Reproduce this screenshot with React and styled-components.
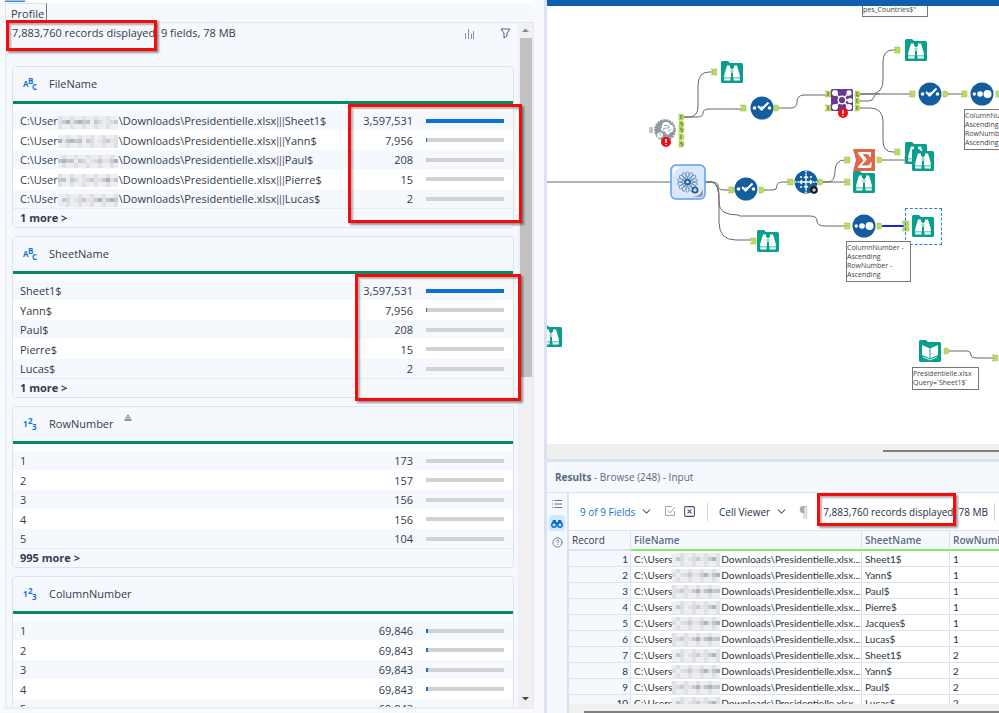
import React from 'react'
import styled, { createGlobalStyle, css } from 'styled-components'
import { ChevronDown, List, CircleHelp, SquareX } from 'lucide-react'

const profiles = [
  {
    name: 'FileName',
    kind: 'text',
    more: '1 more >',
    masked: true,
    rows: [
      ['Sheet1$', '3,597,531', 100],
      ['Yann$', '7,956', 1],
      ['Paul$', '208', 0],
      ['Pierre$', '15', 0],
      ['Lucas$', '2', 0],
    ],
  },
  {
    name: 'SheetName',
    kind: 'text',
    more: '1 more >',
    rows: [
      ['Sheet1$', '3,597,531', 100],
      ['Yann$', '7,956', 1],
      ['Paul$', '208', 0],
      ['Pierre$', '15', 0],
      ['Lucas$', '2', 0],
    ],
  },
  {
    name: 'RowNumber',
    kind: 'number',
    more: '995 more >',
    warning: true,
    rows: [
      ['1', '173', 0],
      ['2', '157', 0],
      ['3', '156', 0],
      ['4', '156', 0],
      ['5', '104', 0],
    ],
  },
  {
    name: 'ColumnNumber',
    kind: 'number',
    more: '995 more >',
    rows: [
      ['1', '69,846', 2],
      ['2', '69,843', 2],
      ['3', '69,843', 2],
      ['4', '69,843', 2],
      ['5', '69,843', 2],
    ],
  },
]

const records = [
  ['Sheet1$', 1], ['Yann$', 1], ['Paul$', 1], ['Pierre$', 1], ['Jacques$', 1],
  ['Lucas$', 1], ['Sheet1$', 2], ['Yann$', 2], ['Paul$', 2], ['Lucas$', 2],
]

const shades = ['#dfe1e6', '#c6c9d0', '#e6e4e6', '#aeb3bc', '#eceef2', '#cdc9ce', '#bfc4cd', '#d6dae2']

const Mosaic = ({ cols, seed }) => (
  <MosaicSvg width={cols * 4} height="13" aria-hidden="true">
    {Array.from({ length: cols * 3 }, (_, i) => {
      const col = i % cols
      const row = Math.floor(i / cols)
      const pick = row === 1 ? (col * 5 + seed * 3 + (col >> 1)) % 8 : ((col + seed) % 3 ? 4 : 0)
      return <rect key={i} x={col * 4} y={row * 4} width="4" height="5" fill={shades[pick]} />
    })}
  </MosaicSvg>
)

const TypeIcon = ({ kind }) => {
  const [a, b, c] = kind === 'text' ? 'ABC' : '123'
  return (
    <GlyphSvg width="16" height="14" aria-hidden="true">
      <text x="0" y="10">{a}</text>
      <text x="5" y="7">{b}</text>
      <text x="9" y="13">{c}</text>
    </GlyphSvg>
  )
}

const ProfileCard = ({ item }) => (
  <Card>
    <CardHeader>
      <TypeIcon kind={item.kind} />
      <CardTitle>{item.name}</CardTitle>
      {item.warning && (
        <WarnSvg width="8" height="7" viewBox="0 0 8 7">
          <path d="M4 .8 7.4 6.4H.6Z M4 2.8V4.6 M2.4 5.4H5.6" fill="#e9ebef" stroke="#6b7079" strokeWidth=".8" />
        </WarnSvg>
      )}
    </CardHeader>
    <ValueTable>
      <tbody>
        {item.rows.map(([label, count, share], i) => (
          <ValueRow key={label}>
            <td>
              {item.masked
                ? <>C:\User<Mosaic cols={15} seed={i} />\Downloads\Presidentielle.xlsx<Pipes>|||</Pipes>{label}</>
                : label}
            </td>
            <CountCell>{count}</CountCell>
            <BarCell>
              <Track><Fill style={{ width: `${share}%` }} /></Track>
            </BarCell>
          </ValueRow>
        ))}
      </tbody>
    </ValueTable>
    <MoreButton>{item.more}</MoreButton>
  </Card>
)

const Folder = () => <path d="M0 1.5Q0 0 1.5 0H7L9 2H20.500Q22 2 22 3.500V20.500Q22 22 20.500 22H1.500Q0 22 0 20.500Z" fill="#08a08c" />

const BrowseIcon = () => (
  <svg width="22" height="22" viewBox="0 0 22 22">
    <Folder />
    <path d="M6 4.500H9V7H10V16.500H3.200V14Z M13 4.500H16L18.800 14V16.500H12V7H13Z M9 8H13V12H9Z" fill="#fff" />
    <path d="M3.200 17.300H9.500V19.500H3.200Z M12.500 17.300H18.800V19.500H12.500Z" fill="#fff" />
    <path d="M10.200 8.500V12 M11.800 8.500V12" stroke="#08a08c" strokeWidth=".6" />
  </svg>
)

const InputIcon = () => (
  <svg width="22" height="22" viewBox="0 0 22 22">
    <Folder />
    <path d="M3 5 11 8.500 19 5V15L11 18.500 3 15Z" fill="#fff" />
    <path d="M11 8.500V18 M3 16.500 11 20 19 16.500" fill="none" stroke="#08a08c" />
    <path d="M4 17 11 20 18 17" fill="none" stroke="#fff" strokeWidth=".8" />
  </svg>
)

const SelectIcon = () => (
  <svg width="24" height="24" viewBox="0 0 24 24">
    <circle cx="12" cy="12" r="11.500" fill="#145d9f" />
    <g fill="#fff"><circle cx="4.500" cy="12" r="1.800" /><circle cx="12" cy="12" r="1.800" /><circle cx="19.500" cy="12" r="1.800" /></g>
    <path d="m8 10 3.500 3.500 7-7" fill="none" stroke="#fff" strokeWidth="2" />
  </svg>
)

const SortIcon = () => (
  <svg width="24" height="24" viewBox="0 0 24 24">
    <circle cx="12" cy="12" r="11.500" fill="#145d9f" />
    <g fill="#fff"><circle cx="4.300" cy="12" r="1.700" /><circle cx="10" cy="12" r="2.800" /><circle cx="17.500" cy="12" r="4" /></g>
  </svg>
)

const TransposeIcon = () => (
  <svg width="24" height="24" viewBox="0 0 24 24">
    <circle cx="12" cy="12" r="11.500" fill="#145d9f" />
    <path d="M12 6V18M6 12H18M10 8l2-2 2 2M10 16l2 2 2-2M8 10l-2 2 2 2M16 10l2 2-2 2" fill="none" stroke="#fff" strokeWidth="1.300" />
    <path d="M12 1V5M12 19V23M1 12H5M19 12H23" stroke="#fff" strokeWidth="1.500" strokeDasharray="1.500 1" />
    <g fill="#fff"><circle cx="7" cy="7" r="1" /><circle cx="17" cy="7" r="1" /><circle cx="7" cy="17" r="1" /></g>
    <circle cx="20" cy="20" r="3.800" fill="#151515" />
    <path d="M20 18V22M18 20H22" stroke="#fff" />
  </svg>
)

const SummarizeIcon = () => (
  <svg width="22" height="22" viewBox="0 0 22 22">
    <path d="M0 0H22V22H0L3 11Z" fill="#e2654b" />
    <path d="M5 3H18V8H16.500Q16 5 13 5H9.500L14 10.500 8.500 16.500H14Q17 16.500 17.500 13.500H19L18 19H5V17.500L10.500 11.500 5 4.500Z" fill="#fff" />
  </svg>
)

const ErrorBadge = ({ cx, cy }) => (
  <>
    <circle cx={cx} cy={cy} r="5" fill="#f30b14" />
    <path d={`M${cx} ${cy - 3}v4M${cx} ${cy + 2}v1`} stroke="#fff" strokeWidth="1.500" />
  </>
)

const JoinIcon = () => (
  <svg width="22" height="30" viewBox="0 0 22 30">
    <rect width="22" height="22" rx="1.500" fill="#663a93" />
    <path d="M4 4 18 18M18 4 4 18M11 11H19" stroke="#fff" strokeWidth="1.300" />
    <g fill="#fff"><circle cx="4" cy="4" r="3" /><circle cx="18" cy="4" r="2.700" /><circle cx="19" cy="11.500" r="2.500" /><circle cx="4" cy="18" r="3" /><circle cx="18" cy="18" r="3" /></g>
    <circle cx="11" cy="11" r="3.800" fill="#663a93" stroke="#fff" strokeWidth="1.400" />
    <ErrorBadge cx={12} cy={24} />
  </svg>
)

const PythonIcon = () => (
  <svg width="24" height="30" viewBox="0 0 24 30">
    <circle cx="12" cy="12" r="10" fill="#8d9a9f" />
    <circle cx="12" cy="12" r="10" fill="none" stroke="#8d9a9f" strokeWidth="2" strokeDasharray="2 1" />
    <path d="M9 8Q9 4 13 4 17 4 17 6.500 21 7 20.500 11 20 14.500 17 14.500 16 18 13 16L12 13.500H10Q8 13 8 11Z" fill="#fff" />
    <path d="M11.500 7.500H15Q17 8 16 10H13Q10 10 10 12.500M15 13Q17 13 18 11" fill="none" stroke="#8d9a9f" strokeWidth=".9" />
    <circle cx="7" cy="17" r="2.800" fill="#fff" />
    <path d="m6 15 2 2.500" stroke="#8d9a9f" />
    <ErrorBadge cx={13} cy={24} />
  </svg>
)

const MacroIcon = () => (
  <svg width="36" height="36" viewBox="0 0 36 36">
    <rect x="1" y="1" width="34" height="34" rx="5" fill="#d9e8fc" stroke="#639bf5" strokeWidth="1.500" />
    <path d="M3 12Q4 3 15 3H7Q3 3 3 7Z" fill="#fff" />
    <path d="M22 33Q31 32 33 25V30Q33 33 30 33Z" fill="#8d98a8" />
    <g fill="none" stroke="#5e86ad" strokeWidth=".8">
      {Array.from({ length: 14 }, (_, i) => (
        <ellipse key={i} cx="17.500" cy="10.500" rx="1.600" ry="2.700" transform={`rotate(${i * 360 / 14} 17.500 18)`} />
      ))}
      {Array.from({ length: 10 }, (_, i) => (
        <path key={i} d="M17.500 12.500V15" transform={`rotate(${i * 36} 17.500 18)`} />
      ))}
    </g>
    <circle cx="17.500" cy="18" r="3.600" fill="#2668a3" />
    <circle cx="17.500" cy="18" r="1.300" fill="#d9e8fc" />
    <circle cx="25" cy="26" r="3.500" fill="#235d93" />
    <path d="M25 24V28M23 26H27" stroke="#fff" />
  </svg>
)

const nodes = [
  [721, 61, BrowseIcon], [905, 39, BrowseIcon], [905, 142, BrowseIcon], [912, 149, BrowseIcon],
  [853, 149, SummarizeIcon], [853, 171, BrowseIcon], [757, 230, BrowseIcon], [912, 215, BrowseIcon],
  [540, 325, BrowseIcon], [919, 340, InputIcon], [750, 96, SelectIcon], [918, 82, SelectIcon],
  [734, 177, SelectIcon], [970, 82, SortIcon], [852, 214, SortIcon], [794, 170, TransposeIcon],
  [831, 89, JoinIcon], [653, 118, PythonIcon], [670, 164, MacroIcon],
]

const wires = [
  'M547 182H672',
  'M683 117H689Q698 117 698 106V86Q698 72 709 72H716',
  'M683 117H697Q703 117 703 113T709 109H745',
  'M779 108H791Q797 108 797 102T803 95H828',
  'M860 94H872Q883 93 883 80V62Q883 50 893 50H900',
  'M860 94H913',
  'M860 101H868Q873 101 874 97T880 94',
  'M860 108H870Q883 108 883 122V141Q883 152 893 152H900',
  'M947 94H966',
  'M706 182H712Q718 182 718 186T725 190H730',
  'M706 182H712Q719 184 719 195V203Q719 215 738 215L740 216H810Q817 216 817 221T825 226H848',
  'M706 182H712Q719 184 719 200V222Q719 240 736 240H751',
  'M764 190H773Q777 190 777 186T783 182H790',
  'M821 182H828Q835 182 835 171T845 160H848',
  'M821 182H848',
  'M881 160H907',
  'M948 351H968Q971 352 971 355T978 358H996',
]

const inAnchors = [
  [714, 72], [743, 108], [897, 50], [912, 94], [964, 94], [897, 152], [907, 160], [847, 160],
  [847, 182], [847, 226], [731, 190], [790, 182], [753, 241], [995, 358], [828, 94], [828, 108], [674, 182],
]
const outAnchors = [
  [776, 108], [945, 94], [998, 94], [879, 160], [879, 226], [761, 190], [820, 182], [946, 351],
  [703, 182], [857, 94], [857, 101], [857, 108], [681, 117], [681, 124], [681, 130], [681, 137], [681, 144],
]

const Wires = () => (
  <WireSvg width="452" height="438" viewBox="547 6 452 438">
    {wires.map((d) => <path key={d} d={d} fill="none" stroke="#666" />)}
    <path d="M882 226H905" stroke="#2020e0" strokeWidth="2" />
    <g fill="#b9dc63" stroke="#9bc447" strokeWidth=".5">
      {inAnchors.map(([x, y]) => <path key={`${x}-${y}`} d={`M${x - 3} ${y - 3}h6v6h-6l2-3z`} />)}
      {outAnchors.map(([x, y]) => <path key={`${x}-${y}`} d={`M${x - 2} ${y - 3}h3q2 0 2 3t-2 3h-3z`} />)}
      <path d="M902 221h7v10h-7l2-5z" />
    </g>
    <path d="M681 115v4M680 123h2v3M680 129h2v3M681 135v4M680 143h2v3M857 92v4h2M857 99v4M857 106v4M828 92v4M828 106v4" fill="none" stroke="#47641f" strokeWidth=".9" />
    <path d="M649 128h4M649 130h4M649 132h4" stroke="#888" />
  </WireSvg>
)

const App = () => {
  return (
    <Window>
      <GlobalStyle />
      <ProfilePane>
        <TopStrip><TopStub /></TopStrip>
        <TabRow><Tab>Profile</Tab></TabRow>
        <ProfileBody>
          <ProfileContent>
            <ProfileTools>
              <span>7,883,760 records displayed, 9 fields, 78 MB</span>
              <ToolIcons>
                <IconButton aria-label="Show charts">
                  <svg width="10" height="11"><path d="M1.500 11V5M4.500 11V1M7.500 11V6M9.500 11V3" stroke="#8290a8" /></svg>
                </IconButton>
                <IconButton aria-label="Filter">
                  <svg width="11" height="11"><path d="M1 1H10L7 5V8L4 10V5Z" fill="none" stroke="#51617f" /></svg>
                </IconButton>
              </ToolIcons>
            </ProfileTools>
            {profiles.map((item) => <ProfileCard key={item.name} item={item} />)}
          </ProfileContent>
          <Scrollbar>
            <svg width="13" height="15"><path d="M3 9 6.500 5.500 10 9Z" fill="#8a8a8a" /></svg>
            <Thumb />
            <svg width="13" height="15"><path d="M3 5 6.500 8.500 10 5Z" fill="#444" /></svg>
          </Scrollbar>
        </ProfileBody>
      </ProfilePane>

      <WorkPane>
        <Canvas>
          <Wires />
          {nodes.map(([x, y, Icon]) => <Node key={`${x}-${y}`} $x={x} $y={y}><Icon /></Node>)}
          <Selection $x={905} $y={208} />
          <Note $x={862} $y={3} $w={66}>pes_Countries$"</Note>
          <Note $x={964} $y={109} $w={64}>ColumnNumber -<br />Ascending<br />RowNumber -<br />Ascending</Note>
          <Note $x={846} $y={241} $w={65}>ColumnNumber -<br />Ascending<br />RowNumber -<br />Ascending</Note>
          <Note $x={912} $y={367} $w={67}>Presidentielle.xlsx<br />Query=`Sheet1$`</Note>
        </Canvas>
        <CanvasScroll><ScrollLine $start={336} /></CanvasScroll>
        <Results>
          <ResultsHeader><b>Results</b> - Browse (248) - Input</ResultsHeader>
          <ResultsBody>
            <SideTools>
              <SideButton aria-label="Messages"><List size={12} strokeWidth={2} /></SideButton>
              <SideButton $active aria-label="Data">
                <svg width="12" height="9" viewBox="0 0 12 9">
                  <path d="M2 1H5V3H7V1H10L12 6H0Z" fill="#0a70d2" />
                  <circle cx="3" cy="6" r="2.200" fill="#d2e7fd" stroke="#0a70d2" strokeWidth="1.500" />
                  <circle cx="9" cy="6" r="2.200" fill="#d2e7fd" stroke="#0a70d2" strokeWidth="1.500" />
                </svg>
              </SideButton>
              <SideButton aria-label="Help"><CircleHelp size={11} strokeWidth={2} /></SideButton>
            </SideTools>
            <ResultsMain>
              <ResultsTools>
                <Picker $blue>
                  <select aria-label="Fields"><option>9 of 9 Fields</option></select>
                  <ChevronDown size={13} />
                </Picker>
                <ToolPair>
                  <IconButton aria-label="Select all">
                    <svg width="12" height="12"><path d="M8 1.500H1.500V10.500H10.500V6M4 5.500 6 8 11 2" fill="none" stroke="#a3a7ae" /></svg>
                  </IconButton>
                  <IconButton aria-label="Clear selection"><SquareX size={13} color="#3f5273" /></IconButton>
                </ToolPair>
                <Separator />
                <Picker>
                  <select aria-label="Viewer"><option>Cell Viewer</option></select>
                  <ChevronDown size={13} />
                </Picker>
                <Pilcrow aria-label="Show whitespace">¶</Pilcrow>
                <RecordCount>7,883,760 records displayed, 78 MB<Separator /></RecordCount>
              </ResultsTools>
              <TableWrap>
                <DataTable>
                  <colgroup><IndexCol /><FileCol /><SheetCol /><RowCol /></colgroup>
                  <thead>
                    <tr><th>Record</th><th>FileName</th><th>SheetName</th><th>RowNumber</th></tr>
                  </thead>
                  <tbody>
                    {records.map(([sheet, row], i) => (
                      <tr key={i}>
                        <td>{i + 1}</td>
                        <td>C:\Users<Mosaic cols={12} seed={i % 3 + 4} />Downloads\Presidentielle.xlsx...</td>
                        <td>{sheet}</td>
                        <td>{row}</td>
                      </tr>
                    ))}
                  </tbody>
                </DataTable>
              </TableWrap>
              <TableScroll><ScrollLine $start={15} /></TableScroll>
            </ResultsMain>
          </ResultsBody>
        </Results>
      </WorkPane>

      <Highlight $x={6} $y={20} $w={151} $h={31} />
      <Highlight $x={348} $y={104} $w={174} $h={119} />
      <Highlight $x={355} $y={274} $w={166} $h={127} />
      <Highlight $x={817} $y={493} $w={139} $h={33} />
    </Window>
  )
}

export default App

const GlobalStyle = createGlobalStyle`
  * { box-sizing: border-box; }
  body {
    margin: 0;
    font-family: "Open Sans", "Noto Sans", sans-serif;
    font-size: 11px;
    color: #333c4c;
    background: #f8faff;
  }
  button, select {
    font: inherit;
    color: inherit;
    padding: 0;
    border: 0;
    background: none;
  }
`

const Window = styled.div`
  position: relative;
  display: flex;
  height: 100vh;
  overflow: hidden;
`
const ProfilePane = styled.section`
  flex: 0 0 544px;
  display: flex;
  flex-direction: column;
  min-height: 0;
  padding: 0 10px 4px 5px;
`
const TopStrip = styled.div`
  flex: 0 0 3px;
  background: #fff;
`
const TopStub = styled.div`
  width: 20px;
  height: 2px;
  background: #9bc7ed;
  border-bottom: 1px solid #3f8bd0;
`
const TabRow = styled.div`
  flex: 0 0 19px;
  display: flex;
  background: #f5f8fd;
`
const Tab = styled.button`
  padding: 0 2px 0 5px;
  border-top: 1px solid #dfe3ea;
  border-left: 1px solid #dfe3ea;
  border-right: 1px solid #777;
`
const ProfileBody = styled.div`
  flex: 1;
  display: flex;
  min-height: 0;
  border: 1px solid #e3e6ec;
  border-left: 2px solid #eceff5;
  border-bottom: 2px solid #ebedf0;
  background: #f5f8fd;
`
const ProfileContent = styled.div`
  flex: 1;
  display: flex;
  flex-direction: column;
  gap: 8px;
  padding: 0 4px 0 5px;
  overflow: hidden;
`
const ProfileTools = styled.div`
  flex: 0 0 35px;
  display: flex;
  justify-content: space-between;
  align-items: flex-start;
  line-height: 20px;
`
const ToolIcons = styled.div`
  display: flex;
  gap: 26px;
  padding: 5px 3px;
`
const IconButton = styled.button`
  display: flex;
`
const Scrollbar = styled.div`
  flex: 0 0 15px;
  display: flex;
  flex-direction: column;
  justify-content: space-between;
  align-items: center;
  background: #f0f0f0;
`
const Thumb = styled.div`
  width: 12px;
  height: 339px;
  margin-bottom: auto;
  background: #c1c1c1;
`
const Card = styled.article`
  flex: none;
  border: 1px solid #dbe3f0;
  border-radius: 4px;
  background: #fff;
  overflow: hidden;
`
const CardHeader = styled.header`
  height: 37px;
  display: flex;
  align-items: center;
  padding: 0 10px 1px;
  border-bottom: 3px solid #088a65;
  background: #f5f8fd;
`
const CardTitle = styled.h2`
  margin: 0 10px;
  font-size: 11px;
  font-weight: 400;
`
const GlyphSvg = styled.svg`
  overflow: visible;
  font-size: 8px;
  font-weight: 700;
  fill: #1675cf;
`
const WarnSvg = styled.svg`
  align-self: flex-start;
  margin-top: 7px;
`
const ValueTable = styled.table`
  width: 100%;
  margin-top: 7px;
  border-collapse: collapse;
`
const ValueRow = styled.tr`
  height: 19px;
  line-height: 19px;
  white-space: nowrap;
  background: #f5f8fd;
  &:nth-child(even) {
    height: 20px;
    background: #fff;
  }
  td {
    padding: 0 0 0 7px;
  }
`
const CountCell = styled.td`
  width: 68px;
  text-align: right;
`
const BarCell = styled.td`
  && {
    width: 100px;
    padding: 0 9px 0 13px;
  }
`
const Track = styled.div`
  height: 4px;
  background: #d2d2d2;
`
const Fill = styled.div`
  height: 4px;
  background: #0b72d9;
`
const MosaicSvg = styled.svg`
  vertical-align: middle;
  margin: -3px 1px -3px 0;
`
const Pipes = styled.span`
  font-family: "Liberation Sans", sans-serif;
  line-height: 1;
  color: #6d5f86;
`
const MoreButton = styled.button`
  display: block;
  width: 100%;
  height: 19px;
  padding: 0 0 1px 7px;
  border-top: 1px solid #e6ebf3;
  background: #f5f8fd;
  text-align: left;
  font-weight: 700;
  line-height: 17px;
`

const WorkPane = styled.main`
  flex: 1;
  min-width: 0;
  display: flex;
  flex-direction: column;
  border-left: 3px solid #dbe3f3;
`
const Canvas = styled.div`
  position: relative;
  flex: 1;
  overflow: hidden;
  border-top: 6px solid #0e60ae;
  background: #fff;
`
const WireSvg = styled.svg`
  position: absolute;
  left: 0;
  top: 0;
`
// canvas items take workspace coordinates, whose origin is the window corner
const placed = css`
  position: absolute;
  left: ${(p) => p.$x - 547}px;
  top: ${(p) => p.$y - 6}px;
`
const Node = styled.div`
  ${placed}
  svg {
    display: block;
  }
`
const Selection = styled.div`
  ${placed}
  width: 37px;
  height: 37px;
  border: 1px dashed #2083dc;
`
const Note = styled.div`
  ${placed}
  width: ${(p) => p.$w}px;
  padding: 1px 0 2px;
  border: 1px solid #777;
  background: #fff;
  font-size: 7px;
  line-height: 9px;
  white-space: nowrap;
  color: #444;
`
const CanvasScroll = styled.div`
  flex: 0 0 15px;
  padding-top: 6px;
  background: #efefef;
`
const ScrollLine = styled.div`
  height: 2px;
  margin-left: ${(p) => p.$start}px;
  background: #808080;
`
const Results = styled.section`
  flex: 0 0 254px;
  min-height: 0;
  display: flex;
  flex-direction: column;
  border-top: 3px solid #dbe3f0;
`
const ResultsHeader = styled.header`
  flex: 0 0 31px;
  padding-left: 8px;
  border-bottom: 1px solid #dbe3f0;
  background: #f5f8fd;
  font-size: 10px;
  line-height: 30px;
  color: #5b6880;
`
const ResultsBody = styled.div`
  flex: 1;
  display: flex;
  min-height: 0;
`
const SideTools = styled.nav`
  flex: 0 0 22px;
  display: flex;
  flex-direction: column;
  align-items: center;
  gap: 3px;
  padding: 3px 1px;
  border-right: 2px solid #dbe3f0;
  background: #f5f8fd;
`
const SideButton = styled.button`
  width: 16px;
  height: 16px;
  display: flex;
  justify-content: center;
  align-items: center;
  border-radius: 3px;
  color: #66738b;
  background: ${(p) => (p.$active ? '#d2e7fd' : 'none')};
`
const ResultsMain = styled.div`
  flex: 1;
  min-width: 0;
  min-height: 0;
  display: flex;
  flex-direction: column;
  background: #fff;
`
const ResultsTools = styled.div`
  flex: 0 0 37px;
  display: flex;
  align-items: center;
  gap: 11px;
  padding-left: 11px;
  overflow: hidden;
  font-size: 10px;
  white-space: nowrap;
  color: #22304a;
`
const Picker = styled.label`
  display: flex;
  align-items: center;
  gap: 4px;
  color: ${(p) => (p.$blue ? '#1673cf' : '#22304a')};
  select {
    appearance: none;
  }
  svg {
    color: #51617f;
  }
`
const ToolPair = styled.div`
  display: flex;
  gap: 7px;
`
const Separator = styled.div`
  flex: none;
  width: 1px;
  height: 18px;
  background: #ccd3df;
`
const Pilcrow = styled.button`
  font-size: 14px;
  color: #a7abb2;
`
const RecordCount = styled.span`
  display: flex;
  align-items: center;
  gap: 6px;
  margin-left: 4px;
`
const TableWrap = styled.div`
  flex: 1;
  min-height: 0;
  overflow: hidden;
`
const DataTable = styled.table`
  width: 461px;
  table-layout: fixed;
  border-collapse: separate;
  border-spacing: 0;
  font-size: 10px;
  color: #2c3441;
  th, td {
    height: 16px;
    padding: 0 2px 0 3px;
    line-height: 14px;
    white-space: nowrap;
    overflow: hidden;
    border-right: 1px solid #dbe3f0;
    border-bottom: 1px solid #dbe3f0;
  }
  td {
    font-family: Lato, "Open Sans", sans-serif;
  }
  th {
    height: 21px;
    text-align: left;
    font-weight: 600;
    color: #5c6b85;
    background: #f5f8fd;
    border-top: 1px solid #dbe3f0;
    border-bottom: 2px solid #80ec6c;
  }
  th:first-child {
    font-weight: 400;
    color: #333c4c;
    border-bottom-color: #dbe3f0;
  }
  td:first-child {
    text-align: right;
    background: #f5f8fd;
  }
`
const IndexCol = styled.col`
  width: 62px;
`
const FileCol = styled.col`
  width: 231px;
`
const SheetCol = styled.col`
  width: 88px;
`
const RowCol = styled.col`
  width: 80px;
`
const TableScroll = styled.div`
  flex: 0 0 9px;
  padding-top: 7px;
  background: #f0f0f0;
`
const Highlight = styled.div`
  position: absolute;
  left: ${(p) => p.$x}px;
  top: ${(p) => p.$y}px;
  width: ${(p) => p.$w}px;
  height: ${(p) => p.$h}px;
  border: 3px solid #f40b0b;
  box-shadow: 2px 2px 2px rgba(0, 0, 0, 0.4), inset 2px 2px 2px rgba(0, 0, 0, 0.3);
  pointer-events: none;
`
